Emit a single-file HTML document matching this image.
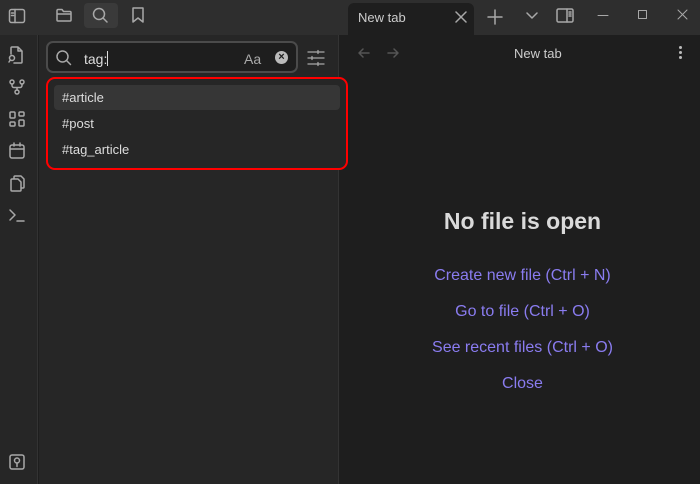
<!DOCTYPE html>
<html><head><style>
*{margin:0;padding:0;box-sizing:border-box}
body{width:700px;height:484px;background:#1e1e1e;font-family:"Liberation Sans",sans-serif;position:relative;overflow:hidden;color:#dadada}
.a{position:absolute}
svg{position:absolute;fill:none;stroke:#a8a8a8;stroke-width:1.5;stroke-linecap:round;stroke-linejoin:round}
.l{position:absolute;left:339px;width:367px;text-align:center;font-size:16px;color:#8a7cf0;line-height:18px}
</style></head><body>
<div class="a" style="left:0;top:0;width:700px;height:35px;background:#2e2e2e"></div>
<div class="a" style="left:0;top:35px;width:38px;height:449px;background:#262626;border-right:1px solid #333"></div>
<div class="a" style="left:39px;top:35px;width:300px;height:449px;background:#262626;border-right:1px solid #333"></div>
<div class="a" style="left:84px;top:3px;width:34px;height:25px;background:#3a3a3a;border-radius:4px"></div>
<div class="a" style="left:348px;top:3px;width:126px;height:33px;background:#1e1e1e;border-radius:6px 6px 0 0"></div>
<div class="a" style="left:358px;top:10px;font-size:13px;color:#ccc">New tab</div>
<svg style="left:8px;top:7px" width="18" height="18" viewBox="0 0 18 18"><rect x="1.5" y="2.5" width="15" height="13" rx="2"/><path d="M7 2.5v13M3.5 6h2M3.5 8.5h2"/></svg>
<svg style="left:55px;top:6px" width="18" height="18" viewBox="0 0 18 18"><path d="M2 4.5a1 1 0 0 1 1-1h4l1.5 2H15a1 1 0 0 1 1 1V14a1 1 0 0 1-1 1H3a1 1 0 0 1-1-1z M2 8h14"/></svg>
<svg style="left:91px;top:6px" width="19" height="19" viewBox="0 0 19 19"><circle cx="8" cy="8" r="5.5"/><path d="M12 12l4 4"/></svg>
<svg style="left:130px;top:6px" width="16" height="18" viewBox="0 0 16 18"><path d="M3 2h10v14l-5-4-5 4z"/></svg>
<svg style="left:455px;top:11px" width="12" height="12" viewBox="0 0 12 12"><path d="M1 1l10 10M11 1L1 11"/></svg>
<svg style="left:487px;top:9px" width="16" height="16" viewBox="0 0 16 16"><path d="M8 1v14M1 8h14"/></svg>
<svg style="left:526px;top:12px" width="12" height="8" viewBox="0 0 12 8"><path d="M1 1l5 5 5-5"/></svg>
<svg style="left:556px;top:7px" width="18" height="18" viewBox="0 0 18 18"><rect x="1" y="2" width="16" height="13" rx="1.5"/><path d="M11 2v13M13 5h2M13 7h2M13 9h2"/></svg>
<svg style="left:597px;top:14px" width="12" height="3" viewBox="0 0 12 3"><path d="M1 1.5h10" style="stroke-width:1"/></svg>
<svg style="left:637px;top:9px" width="12" height="12" viewBox="0 0 12 12"><rect x="1.5" y="1.5" width="8" height="8" style="stroke-width:1"/></svg>
<svg style="left:677px;top:9px" width="12" height="12" viewBox="0 0 12 12"><path d="M1 1l9 9M10 1L1 10" style="stroke-width:1"/></svg>
<svg style="left:357px;top:46px" width="14" height="14" viewBox="0 0 14 14" ><path d="M12 7H2M6 3L2 7l4 4" style="stroke:#555"/></svg>
<svg style="left:386px;top:46px" width="14" height="14" viewBox="0 0 14 14"><path d="M2 7h10M8 3l4 4-4 4" style="stroke:#555"/></svg>
<div class="a" style="left:514px;top:46px;font-size:13px;color:#ccc">New tab</div>
<div class="a" style="left:679px;top:46px;width:3px;height:3px;background:#bbb;border-radius:50%;box-shadow:0 5px 0 #bbb,0 10px 0 #bbb"></div>
<svg style="left:7px;top:45px" width="18" height="20" viewBox="0 0 18 20"><path d="M4 9V3a1 1 0 0 1 1-1h6l4 4v11a1 1 0 0 1-1 1H7M11 2v4h4"/><circle cx="5" cy="13" r="2.5"/><path d="M2 17l1.3-2"/></svg>
<svg style="left:8px;top:78px" width="18" height="18" viewBox="0 0 18 18"><circle cx="4" cy="4" r="2"/><circle cx="14" cy="4" r="2"/><circle cx="9" cy="14" r="2"/><path d="M4 6v1.5a2 2 0 0 0 2 2h6a2 2 0 0 0 2-2V6M9 9.5V12"/></svg>
<svg style="left:8px;top:110px" width="18" height="18" viewBox="0 0 18 18"><rect x="2" y="2" width="5" height="6" rx="1"/><rect x="11" y="2" width="5" height="4" rx="1"/><rect x="2" y="12" width="5" height="4" rx="1"/><rect x="11" y="10" width="5" height="6" rx="1"/></svg>
<svg style="left:8px;top:142px" width="18" height="18" viewBox="0 0 18 18"><rect x="2" y="3" width="14" height="13" rx="2"/><path d="M2 7h14M6 1v3M12 1v3"/></svg>
<svg style="left:8px;top:174px" width="18" height="18" viewBox="0 0 18 18"><path d="M6 5V3a1 1 0 0 1 1-1h6l3 3v8a1 1 0 0 1-1 1h-2M4 5h6l3 3v8a1 1 0 0 1-1 1H4a1 1 0 0 1-1-1V6a1 1 0 0 1 1-1z"/></svg>
<svg style="left:8px;top:207px" width="18" height="16" viewBox="0 0 18 16"><path d="M2 3l5 5-5 5M9 14h7"/></svg>
<svg style="left:8px;top:453px" width="18" height="18" viewBox="0 0 18 18"><rect x="2" y="2" width="14" height="14" rx="2"/><circle cx="9" cy="7.5" r="2.5"/><path d="M9 10v3.5"/></svg>
<div class="a" style="left:46px;top:41px;width:252px;height:32px;background:#1e1e1e;border:2px solid #4b4b4b;border-radius:7px"></div>
<svg style="left:55px;top:49px" width="18" height="18" viewBox="0 0 18 18"><circle cx="7.5" cy="7.5" r="5.5"/><path d="M11.5 11.5l4 4"/></svg>
<div class="a" style="left:84px;top:51px;font-size:14px;color:#ddd">tag:<span style="display:inline-block;width:1px;height:15px;background:#ddd;vertical-align:-2px"></span></div>
<div class="a" style="left:244px;top:51px;font-size:14px;color:#aaa">Aa</div>
<div class="a" style="left:275px;top:51px;width:13px;height:13px;border-radius:50%;background:#bbb;color:#1e1e1e;font-size:11px;line-height:13px;text-align:center;font-weight:bold">×</div>
<svg style="left:307px;top:49px" width="18" height="18" viewBox="0 0 18 18"><path d="M1 3h16M1 9h16M1 15h16M11 1.5v3M5 7.5v3M11 13.5v3" style="stroke-width:1.3"/></svg>
<div class="a" style="left:46px;top:77px;width:302px;height:93px;background:#262626;border:2.5px solid #ff0000;border-radius:9px"></div>
<div class="a" style="left:54px;top:85px;width:286px;height:25px;background:#363636;border-radius:4px"></div>
<div class="a" style="left:62px;top:90px;font-size:13px;color:#ddd">#article</div>
<div class="a" style="left:62px;top:116px;font-size:13px;color:#ddd">#post</div>
<div class="a" style="left:62px;top:142px;font-size:13px;color:#ddd">#tag_article</div>
<div class="a" style="left:339px;top:208px;width:367px;text-align:center;font-size:23px;font-weight:bold;color:#dadada">No file is open</div>
<div class="l" style="top:267px">Create new file (Ctrl + N)</div>
<div class="l" style="top:303px">Go to file (Ctrl + O)</div>
<div class="l" style="top:339px">See recent files (Ctrl + O)</div>
<div class="l" style="top:375px">Close</div>
</body></html>
